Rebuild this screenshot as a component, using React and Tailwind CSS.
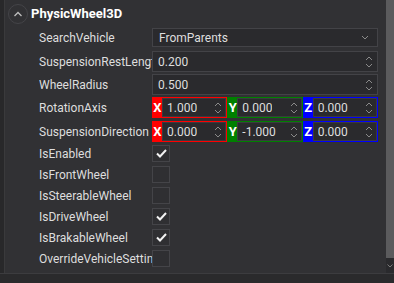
import React from "react";

const Spin = () => (
  <svg width="8" height="14" viewBox="0 0 8 14" className="shrink-0">
    <path d="M1 5 L4 2 L7 5" fill="none" stroke="#8a8a8a" strokeWidth="1" />
    <path d="M1 9 L4 12 L7 9" fill="none" stroke="#8a8a8a" strokeWidth="1" />
  </svg>
);

const Check = () => (
  <svg width="11" height="9" viewBox="0 0 11 9">
    <path d="M1 4.5 L4 7.5 L10 1" fill="none" stroke="#f2f2f2" strokeWidth="2" />
  </svg>
);

const NumberField = ({ value }) => (
  <div className="flex h-[21px] min-w-0 flex-1 items-center justify-between border border-[#434347] bg-[#2a2a2d] pl-[5px] pr-[4px]">
    <span>{value}</span>
    <Spin />
  </div>
);

const VecPart = ({ axis, value, color }) => (
  <div className={`flex h-[21px] min-w-0 flex-1 items-stretch border ${color}`}>
    <div className={`flex w-[9px] shrink-0 items-center justify-center text-[13px] font-bold text-white ${color}`}>
      {axis}
    </div>
    <div className="flex min-w-0 flex-1 items-center justify-between border border-[#3a3a3e] bg-[#2a2a2d] pl-[4px] pr-[3px]">
      <span className="overflow-hidden whitespace-nowrap">{value}</span>
      <Spin />
    </div>
  </div>
);

const Row = ({ label, children, className = "" }) => (
  <div className={`flex items-center ${className}`}>
    <div className="w-[113px] shrink-0 overflow-hidden whitespace-nowrap pr-[4px]">{label}</div>
    <div className="flex min-w-0 flex-1">{children}</div>
  </div>
);

const CheckBox = ({ on }) => (
  <div className="flex h-[17px] w-[18px] items-center justify-center border border-[#444448] bg-[#2f2f32]">
    {on && <Check />}
  </div>
);

export default function App() {
  const checks = [
    ["IsEnabled", true],
    ["IsFrontWheel", false],
    ["IsSteerableWheel", false],
    ["IsDriveWheel", true],
    ["IsBrakableWheel", true],
    ["OverrideVehicleSettings", false],
  ];

  return (
    <div
      className="flex h-[283px] w-[394px] flex-col bg-[#262628] text-[12px] leading-[16px] text-[#dedede]"
      style={{ fontFamily: "Roboto, 'Liberation Sans', sans-serif" }}
    >
      <div className="flex flex-1">
        <div className="w-[4px] bg-[#28282a]" />
        <div className="flex min-w-0 flex-1 flex-col border-l border-[#3a3a3c] bg-[#313134]">
          {/* Header */}
          <div className="flex h-[27px] items-center pl-[3px]">
            <div className="flex h-[20px] w-[20px] items-center justify-center rounded-full border border-[#444448]">
              <svg width="10" height="6" viewBox="0 0 10 6">
                <path d="M1.5 5 L5 1.5 L8.5 5" fill="none" stroke="#bdbdbd" strokeWidth="1.3" />
              </svg>
            </div>
            <span className="ml-[3px] text-[13px] font-bold text-white">PhysicWheel3D</span>
          </div>

          <div className="flex flex-col pl-[34px] pr-[8px]">
            <Row label="SearchVehicle" className="mt-[1px]">
              <div className="flex h-[19px] flex-1 items-center justify-between border border-[#434347] bg-[#2a2a2d] pl-[6px] pr-[8px]">
                <span>FromParents</span>
                <svg width="8" height="5" viewBox="0 0 8 5">
                  <path d="M1 1 L4 4 L7 1" fill="none" stroke="#8a8a8a" strokeWidth="1" />
                </svg>
              </div>
            </Row>
            <Row label="SuspensionRestLength" className="mt-[4px]">
              <NumberField value="0.200" />
            </Row>
            <Row label="WheelRadius" className="mt-[2px]">
              <NumberField value="0.500" />
            </Row>
            <Row label="RotationAxis" className="mt-[2px]">
              <VecPart axis="X" value="1.000" color="border-[#ff0000] bg-[#ff0000]" />
              <VecPart axis="Y" value="0.000" color="border-[#008000] bg-[#008000]" />
              <VecPart axis="Z" value="0.000" color="border-[#0000ff] bg-[#0000ff]" />
            </Row>
            <Row label="SuspensionDirection" className="mt-[3px]">
              <VecPart axis="X" value="0.000" color="border-[#ff0000] bg-[#ff0000]" />
              <VecPart axis="Y" value="-1.000" color="border-[#008000] bg-[#008000]" />
              <VecPart axis="Z" value="0.000" color="border-[#0000ff] bg-[#0000ff]" />
            </Row>
            <div className="mt-[3px] flex flex-col gap-[4px]">
              {checks.map(([label, on]) => (
                <Row key={label} label={label}>
                  <CheckBox on={on} />
                </Row>
              ))}
            </div>
          </div>
        </div>
        {/* Scrollbar */}
        <div className="flex w-[8px] flex-col bg-[#2a2a2d]">
          <div className="h-[258px] bg-[#5b5b5d]" />
          <div className="flex flex-1 items-center justify-center">
            <svg width="6" height="4" viewBox="0 0 6 4">
              <path d="M0.5 0.5 L3 3 L5.5 0.5" fill="none" stroke="#7a7a7a" strokeWidth="1" />
            </svg>
          </div>
        </div>
      </div>
      <div className="h-[10px] border-t border-[#3c3c3f] bg-[#2a2a2c]" />
    </div>
  );
}
